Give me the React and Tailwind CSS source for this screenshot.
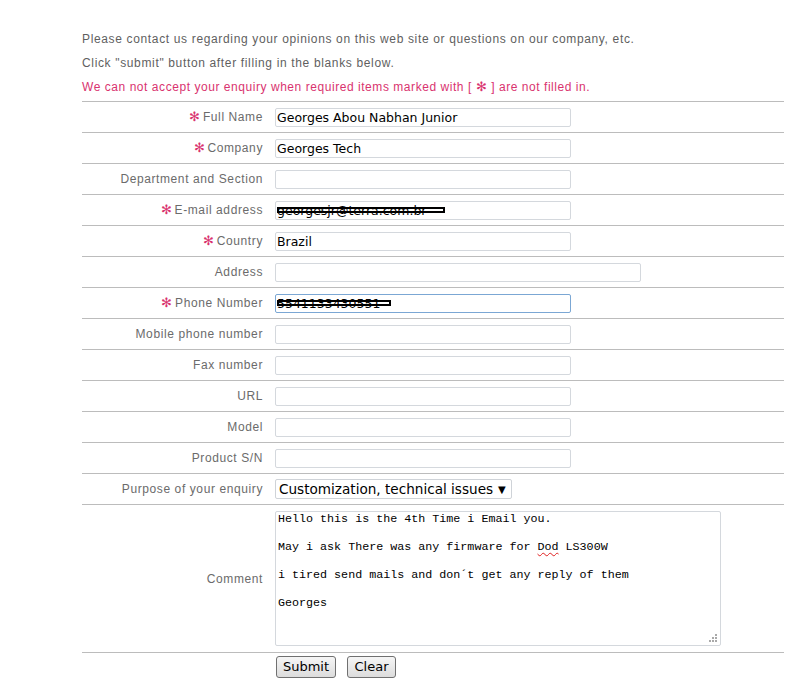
const ROWS = [
  { label: "Full Name", required: true, value: "Georges Abou Nabhan Junior" },
  { label: "Company", required: true, value: "Georges Tech" },
  { label: "Department and Section", value: "" },
  { label: "E-mail address", required: true, value: "georgesjr@terra.com.br", scribble: "w-[168px]" },
  { label: "Country", required: true, value: "Brazil" },
  { label: "Address", value: "", wide: true },
  { label: "Phone Number", required: true, value: "5541133430551", scribble: "w-[114px]", focused: true },
  { label: "Mobile phone number", value: "" },
  { label: "Fax number", value: "" },
  { label: "URL", value: "" },
  { label: "Model", value: "" },
  { label: "Product S/N", value: "" },
];

const labelCls =
  "w-[193px] shrink-0 pr-[12px] text-right text-[12px] tracking-[0.6px] text-[#6b6b6b] font-['Liberation_Sans',Arial,sans-serif]";

function Label({ text, required }) {
  return (
    <div className={labelCls}>
      {required && <span className="mr-[2px] text-[13px] text-[#d9336f]">✻</span>}
      {text}
    </div>
  );
}

function Field({ row }) {
  return (
    <div className="relative">
      <input
        readOnly
        value={row.value}
        className={
          "block h-[19px] rounded-[2px] border bg-white px-[1px] text-[12.5px] text-black outline-none font-['DejaVu_Sans',Verdana,sans-serif] " +
          (row.wide ? "w-[366px] " : "w-[296px] ") +
          (row.focused ? "border-[#7ba7d4]" : "border-[#d4d8dd]")
        }
      />
      {row.scribble && (
        <span
          className={
            "absolute left-[2px] top-[6px] h-[6px] border-2 border-black " + row.scribble
          }
        />
      )}
    </div>
  );
}

function Grip() {
  return (
    <svg width="10" height="10" viewBox="0 0 10 10" className="absolute bottom-[2px] right-[2px]">
      {[[7, 1], [4, 4], [7, 4], [1, 7], [4, 7], [7, 7]].map(([x, y]) => (
        <rect key={x + "-" + y} x={x} y={y} width="2" height="2" fill="#a9a9a9" />
      ))}
    </svg>
  );
}

export default function App() {
  return (
    <div className="min-h-[691px] bg-white pl-[82px] pt-[27px] font-['Liberation_Sans',Arial,sans-serif]">
      <div className="w-[702px]">
        <p className="text-[12px] leading-[24px] tracking-[0.65px] text-[#5f5f5f]">
          Please contact us regarding your opinions on this web site or questions on our company, etc.
        </p>
        <p className="text-[12px] leading-[24px] tracking-[0.65px] text-[#5f5f5f]">
          Click "submit" button after filling in the blanks below.
        </p>
        <p className="mb-[2px] text-[12px] leading-[24px] tracking-[0.55px] text-[#d9336f]">
          We can not accept your enquiry when required items marked with [ <span className="text-[13px]">✻</span> ] are not filled in.
        </p>

        {ROWS.map((row) => (
          <div key={row.label} className="flex h-[31px] items-center border-t border-[#bcbcbc]">
            <Label text={row.label} required={row.required} />
            <Field row={row} />
          </div>
        ))}

        <div className="flex h-[31px] items-center border-t border-[#bcbcbc]">
          <Label text="Purpose of your enquiry" />
          <div className="flex h-[20px] w-[237px] items-center gap-[5px] rounded-[2px] border border-[#cfd3d8] bg-white pl-[3px] text-[13.6px] text-black font-['DejaVu_Sans',Verdana,sans-serif]">
            <span>Customization, technical issues</span>
            <span className="text-[10px]">▼</span>
          </div>
        </div>

        <div className="flex h-[148px] items-center border-t border-[#bcbcbc]">
          <Label text="Comment" />
          <div className="relative h-[135px] w-[446px] rounded-[2px] border border-[#d4d8dd] bg-white px-[2px] pt-0 text-[11.7px] leading-[14px] text-black font-['Liberation_Mono','Courier_New',monospace]">
            <p>Hello this is the 4th Time i Email you.</p>
            <p className="mt-[14px]">
              May i ask There was any firmware for{" "}
              <span className="underline decoration-wavy decoration-[#e02020] decoration-1 underline-offset-2">Dod</span> LS300W
            </p>
            <p className="mt-[14px]">i tired send mails and don´t get any reply of them</p>
            <p className="mt-[14px]">Georges</p>
            <Grip />
          </div>
        </div>

        <div className="flex gap-[11px] border-t border-[#bcbcbc] pl-[194px] pt-[3px]">
          <button className="h-[22px] w-[60px] rounded-[3px] border border-[#707070] bg-gradient-to-b from-[#f6f6f6] to-[#dcdcdc] text-[13px] text-black font-['DejaVu_Sans',Verdana,sans-serif]">
            Submit
          </button>
          <button className="h-[22px] w-[49px] rounded-[3px] border border-[#707070] bg-gradient-to-b from-[#f6f6f6] to-[#dcdcdc] text-[13px] text-black font-['DejaVu_Sans',Verdana,sans-serif]">
            Clear
          </button>
        </div>
      </div>
    </div>
  );
}
